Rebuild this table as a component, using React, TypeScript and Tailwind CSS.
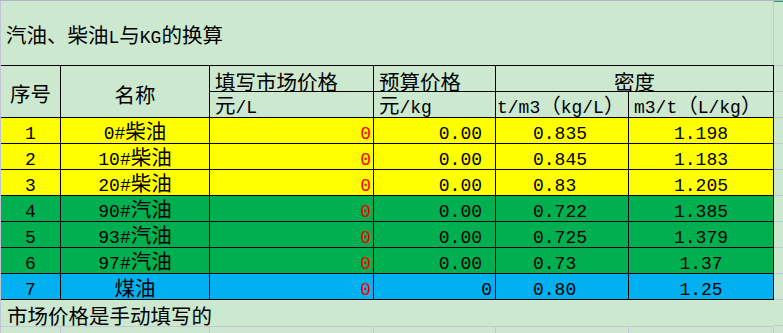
import { Fragment } from 'react'

const MONO = "font-['Liberation_Mono',monospace] text-[18px]"
const CJK = "font-['Noto_Sans_CJK_SC',sans-serif] text-[20.5px]"

// split latin and CJK runs so each gets its own font size
function T({ s }: { s: string }) {
  const parts = s.match(/[\x00-\x7f]+|[^\x00-\x7f]+/g) ?? []
  return (
    <>
      {parts.map((p, i) => (
        <span key={i} className={/^[\x00-\x7f]/.test(p) ? MONO : CJK}>
          {p}
        </span>
      ))}
    </>
  )
}

const ROWS = [
  { n: '1', name: '0#柴油', price: '0', budget: '0.00', d: '0.835', r: '1.198', bg: 'bg-[#ffff00]' },
  { n: '2', name: '10#柴油', price: '0', budget: '0.00', d: '0.845', r: '1.183', bg: 'bg-[#ffff00]' },
  { n: '3', name: '20#柴油', price: '0', budget: '0.00', d: '0.83', r: '1.205', bg: 'bg-[#ffff00]' },
  { n: '4', name: '90#汽油', price: '0', budget: '0.00', d: '0.722', r: '1.385', bg: 'bg-[#00b050]' },
  { n: '5', name: '93#汽油', price: '0', budget: '0.00', d: '0.725', r: '1.379', bg: 'bg-[#00b050]' },
  { n: '6', name: '97#汽油', price: '0', budget: '0.00', d: '0.73', r: '1.37', bg: 'bg-[#00b050]' },
  { n: '7', name: '煤油', price: '0', budget: '0', d: '0.80', r: '1.25', bg: 'bg-[#00b0f0]' },
]

const cell = 'h-[25px] flex items-end leading-[18px] whitespace-nowrap text-black'
const head = 'h-[25px] flex items-end pb-[1px] leading-[18px] whitespace-nowrap text-black bg-[#cce8cf]'

export default function App() {
  return (
    <div className="w-[783px] h-[333px] bg-[#cce8cf] border-t border-[#aeb5c8] overflow-hidden relative">
      <div className="absolute top-[-1px] left-[774px] w-[9px] h-[2px] bg-[#21a366]" />
      <div className="flex">
        <div className="w-[774px] border-l border-[#bfc4d6]">
          {/* title */}
          <div className="h-[64px] flex items-center pl-[5px] pt-[6px] border-r border-[#c3c7d8]">
            <span className="leading-[24px]">
              <T s="汽油、柴油L与KG的换算" />
            </span>
          </div>

          {/* table */}
          <div className="grid grid-cols-[59px_148px_163px_121px_132px_144px] grid-rows-[repeat(9,25px)] gap-px bg-black pt-px pr-px pb-px">
            <div className="row-span-2 bg-[#cce8cf] flex items-center justify-center pt-[2px] leading-[24px]">
              <T s="序号" />
            </div>
            <div className="row-span-2 bg-[#cce8cf] flex items-center justify-center pt-[5px] leading-[24px]">
              <T s="名称" />
            </div>
            <div className={`${head} pl-[5px]`}>
              <T s="填写市场价格" />
            </div>
            <div className={`${head} pl-[5px]`}>
              <T s="预算价格" />
            </div>
            <div className={`${head} col-span-2 justify-center`}>
              <T s="密度" />
            </div>
            <div className={`${cell} bg-[#cce8cf] pl-[5px]`}>
              <span>
                <T s="元/L" />
              </span>
            </div>
            <div className={`${cell} bg-[#cce8cf] pl-[5px]`}>
              <span>
                <T s="元/kg" />
              </span>
            </div>
            <div className={`${cell} bg-[#cce8cf] pl-[1px]`}>
              <span>
                <T s="t/m3（kg/L）" />
              </span>
            </div>
            <div className={`${cell} bg-[#cce8cf] pl-[5px]`}>
              <span>
                <T s="m3/t（L/kg）" />
              </span>
            </div>

            {ROWS.map((r) => (
              <Fragment key={r.n}>
                <div className={`${cell} ${r.bg} justify-center`}>
                  <T s={r.n} />
                </div>
                <div className={`${cell} ${r.bg} justify-center`}>
                  <span>
                    <T s={r.name} />
                  </span>
                </div>
                <div className={`${cell} ${r.bg} justify-end pr-[2px]`}>
                  <span className={`${MONO} text-[#ff0000]`}>{r.price}</span>
                </div>
                <div className={`${cell} ${r.bg} justify-end ${r.budget === '0' ? 'pr-[3px]' : 'pr-[13px]'}`}>
                  <T s={r.budget} />
                </div>
                <div className={`${cell} ${r.bg} pl-[37px]`}>
                  <T s={r.d} />
                </div>
                <div className={`${cell} ${r.bg} justify-center`}>
                  <T s={r.r} />
                </div>
              </Fragment>
            ))}
          </div>

          {/* note */}
          <div className="h-[27px] border-b border-[#c3c7d8] pl-[6px] flex items-end pb-[1px] leading-[20px]">
            <T s="市场价格是手动填写的" />
          </div>
          <div className="grid grid-cols-[60px_149px_164px_122px_133px_145px] h-[7px]">
            {[0, 1, 2, 3, 4, 5].map((i) => (
              <div key={i} className="border-r border-[#c3c7d8]" />
            ))}
          </div>
        </div>

        {/* cells right of the table */}
        <div className="flex-1">
          <div className="h-[65px] border-b border-[#c3c7d8]" />
          {[0, 1, 2, 3, 4, 5, 6, 7, 8, 9].map((i) => (
            <div key={i} className="h-[26px] border-b border-[#c3c7d8]" />
          ))}
        </div>
      </div>
    </div>
  )
}
